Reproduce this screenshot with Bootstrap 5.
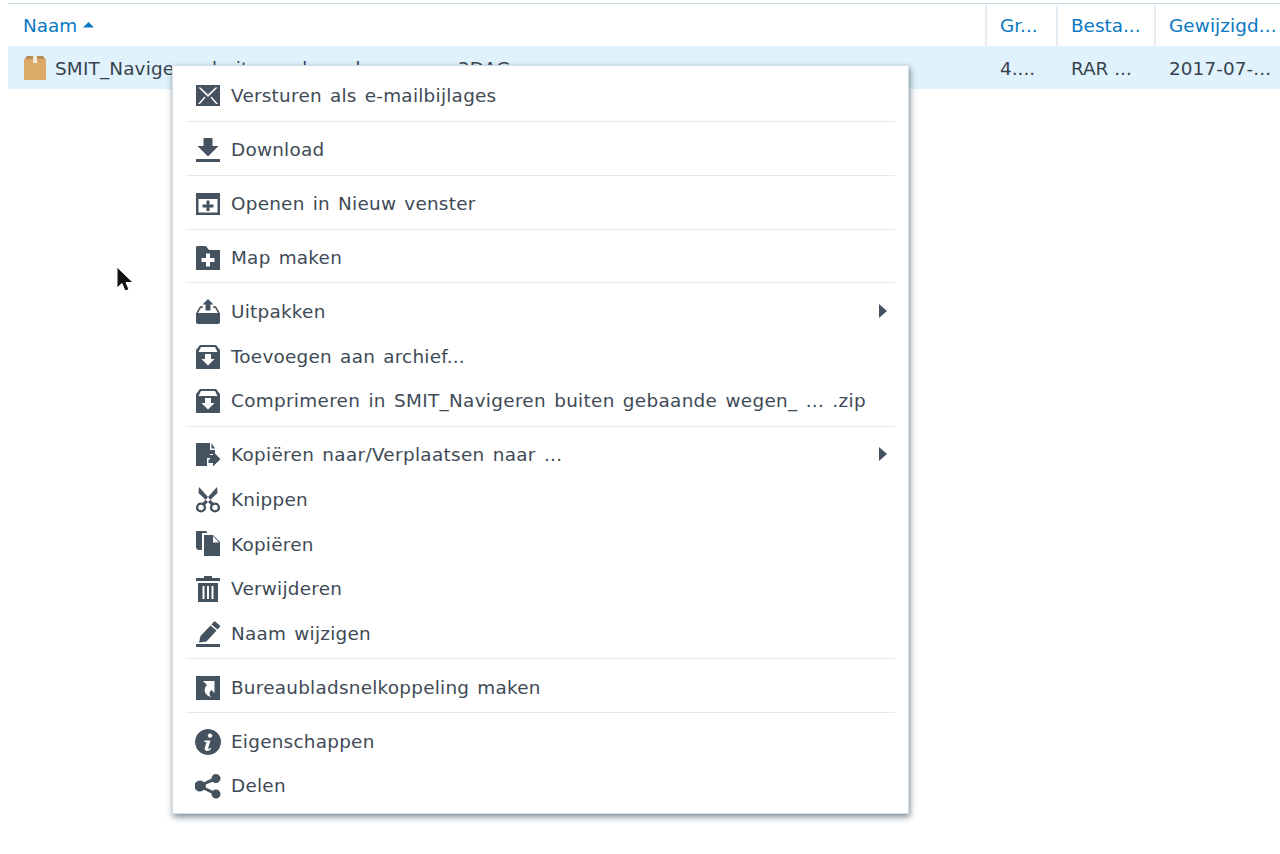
<!DOCTYPE html>
<html lang="nl">
<head>
<meta charset="utf-8">
<title>Bestandsmenu</title>
<link rel="stylesheet" href="https://cdn.jsdelivr.net/npm/bootstrap@5.3.0/dist/css/bootstrap.min.css">
<style>
html,body{height:100%}
body{font-family:"DejaVu Sans","Liberation Sans",sans-serif;font-size:18.4px;color:#3e4a56;background:#fff;overflow:hidden;position:relative}
.file-table{margin:3px 0 0 8px;border-top:1px solid #c9dde9}
.head-row{height:42px;color:#0a78c2;padding-top:1px}
.file-row{height:43px;background:#e0f2fc;color:#38434e;padding-top:2px}
.c-name{width:977px;padding-left:15px}
.c-size{width:71px;padding-left:13px;border-left:2px solid #e3edf3}
.c-type{width:98px;padding-left:13px;border-left:2px solid #e3edf3}
.c-date{flex:1;padding-left:13px;border-left:2px solid #e3edf3;white-space:nowrap;letter-spacing:.1px}
.file-row .c-size,.file-row .c-type,.file-row .c-date{border-left-color:transparent}
.file-title{letter-spacing:.17px;word-spacing:1.200px}
.pkg{margin-right:8px;flex:none;margin-top:-2px}
.sort-up{margin-left:6px}
.ctx-menu.dropdown-menu{display:block;left:172px;top:65px;width:737px;height:748.500px;padding:7.500px 13px;border:1px solid #d5dde3;border-radius:1px;background:#fff;box-shadow:1px 3px 6px rgba(60,75,90,.65)}
.ctx-menu .dropdown-item{height:44.600px;padding:1px 0 0 9px;color:#3e4a56;gap:10px;font-size:18.400px;letter-spacing:.25px;word-spacing:2px}
.ctx-menu .dropdown-item.wide-line{letter-spacing:.32px}
.ctx-menu .dropdown-item:hover{background:#fff}
.ctx-menu svg.ico{flex:none;fill:#45525f}
.ctx-menu .dropdown-divider{margin:2.500px 0 5.870px;border-top:1px solid #e4eaf2;opacity:1}
.sub-caret{margin-left:auto;margin-right:8px;margin-top:-2px;flex:none}
.arrow-cursor{position:absolute;left:114px;top:265px}
</style>
</head>
<body>
<div class="file-table">
  <div class="d-flex align-items-center head-row">
    <div class="c-name d-flex align-items-center">Naam<svg class="sort-up" width="11" height="6" viewBox="0 0 11 6"><path d="M5.500 0 11 5.500H0z" fill="#0a78c2"/></svg></div>
    <div class="c-size h-100 d-flex align-items-center">Gr...</div>
    <div class="c-type h-100 d-flex align-items-center">Besta...</div>
    <div class="c-date h-100 d-flex align-items-center">Gewijzigd...</div>
  </div>
  <div class="d-flex align-items-center file-row">
    <div class="c-name d-flex align-items-center">
      <svg class="pkg" width="24" height="25" viewBox="0 0 24 25"><path d="M1 5 4 1H10V8H14V1H20L23 5V25H1z" fill="#dba968"/><path d="M10 1h4v7h-4z" fill="#f6ead9"/><path d="M4 1h6v3H2z" fill="#b98d58"/><path d="M14 1h6l2 3h-8z" fill="#b98d58"/></svg>
      <span class="text-nowrap file-title">SMIT_Navigeren buiten gebaande wegen_ 3DAG</span>
    </div>
    <div class="c-size">4....</div>
    <div class="c-type">RAR ...</div>
    <div class="c-date">2017-07-...</div>
  </div>
</div>

<svg class="arrow-cursor" width="22" height="30" viewBox="0 0 22 30"><path d="M3 2V23L8 18.500 11 26 15 24.500 12 17.500H19z" fill="#111" stroke="#fff" stroke-width="1"/></svg>

<ul class="dropdown-menu ctx-menu list-unstyled m-0">
  <li><a class="dropdown-item d-flex align-items-center" href="#"><svg class="ico" width="26" height="26" viewBox="0 0 26 26"><path fill-rule="evenodd" d="M1 2H25V23H1zM3.500 4.500 13 14 22.500 4.500H20.500L13 11.500 5.500 4.500zM3 21H5L10.500 14.500 9.500 13.500zM23 21H21L15.500 14.500 16.500 13.500z"/></svg>Versturen als e-mailbijlages</a></li>
  <li><hr class="dropdown-divider"></li>
  <li><a class="dropdown-item d-flex align-items-center" href="#"><svg class="ico" width="26" height="26" viewBox="0 0 26 26"><path d="M8.500 1H17.500V9H23.500L13 19.500 2.500 9H8.500zM1 22H25V25H1z"/></svg>Download</a></li>
  <li><hr class="dropdown-divider"></li>
  <li><a class="dropdown-item d-flex align-items-center" href="#"><svg class="ico" width="26" height="26" viewBox="0 0 26 26"><path fill-rule="evenodd" d="M1 2H25V24H1zM3.500 8V21.500H22.500V8zM11.500 9.500H14.500V13.500H18.500V16.500H14.500V20H11.500V16.500H7.500V13.500H11.500z"/></svg>Openen in Nieuw venster</a></li>
  <li><hr class="dropdown-divider"></li>
  <li><a class="dropdown-item d-flex align-items-center" href="#"><svg class="ico" width="26" height="26" viewBox="0 0 26 26"><path fill-rule="evenodd" d="M2 1H11L14 5H25V25H1V2zM11 8.500V13H6.500V17H11V21.500H15V17H19.500V13H15V8.500z"/></svg>Map maken</a></li>
  <li><hr class="dropdown-divider"></li>
  <li><a class="dropdown-item d-flex align-items-center" href="#"><svg class="ico" width="26" height="26" viewBox="0 0 26 26"><path d="M13 0 18.500 5.500H15.500V11.500H10.500V5.500H7.500z"/><path d="M2 14 5.500 8H8M18 8H20.500L24 14" fill="none" stroke="#45525f" stroke-width="1.500"/><path d="M1 14H25V23Q25 25 23 25H3Q1 25 1 23z"/></svg>Uitpakken<svg class="sub-caret" width="8" height="14" viewBox="0 0 8 14"><path d="M0 0 8 7 0 14z" fill="#45525f"/></svg></a></li>
  <li><a class="dropdown-item d-flex align-items-center" href="#"><svg class="ico" width="26" height="26" viewBox="0 0 26 26"><path fill-rule="evenodd" d="M5 1H21L25 6V25H1V6zM6 3 3.500 8H22.500L20 3zM10 10V15H6.500L13 21.500 19.500 15H16V10z"/></svg>Toevoegen aan archief...</a></li>
  <li><a class="dropdown-item wide-line d-flex align-items-center" href="#"><svg class="ico" width="26" height="26" viewBox="0 0 26 26"><path fill-rule="evenodd" d="M5 1H21L25 6V25H1V6zM6 3 3.500 8H22.500L20 3zM10 10V15H6.500L13 21.500 19.500 15H16V10z"/></svg>Comprimeren in SMIT_Navigeren buiten gebaande wegen_ ... .zip</a></li>
  <li><hr class="dropdown-divider"></li>
  <li><a class="dropdown-item wide-line d-flex align-items-center" href="#"><svg class="ico" width="26" height="26" viewBox="0 0 26 26"><path d="M1 1H15V8H20V12H15V16H12V24H1zM16.500 1 20 6.500H16.500zM15 13H18V9.500L25.500 17 18 24.500V21H13.500V17.500H15z"/></svg>Kopiëren naar/Verplaatsen naar ...<svg class="sub-caret" width="8" height="14" viewBox="0 0 8 14"><path d="M0 0 8 7 0 14z" fill="#45525f"/></svg></a></li>
  <li><a class="dropdown-item d-flex align-items-center" href="#"><svg class="ico" width="26" height="26" viewBox="0 0 26 26"><path d="M4 0 17 14.500 20 17.500 17 19 13.500 15.500 3.500 6zM22 0 9 14.500 6 17.500 9 19 12.500 15.500 22.500 6z"/><circle cx="6" cy="20.500" r="3.900" fill="none" stroke="#45525f" stroke-width="2.400"/><circle cx="20" cy="20.500" r="3.900" fill="none" stroke="#45525f" stroke-width="2.400"/></svg>Knippen</a></li>
  <li><a class="dropdown-item d-flex align-items-center" href="#"><svg class="ico" width="26" height="26" viewBox="0 0 26 26"><path d="M1 0H11L12.500 2H7V19H3L1 17zM9 4H18L25 11V25H9zM18 5V11.500H24z"/></svg>Kopiëren</a></li>
  <li><a class="dropdown-item d-flex align-items-center" href="#"><svg class="ico" width="26" height="26" viewBox="0 0 26 26"><path fill-rule="evenodd" d="M9 0H17V2H25V5H1V2H9zM3 7H23V26H3zM7.500 10V23H9.500V10zM12 10V23H14V10zM16.500 10V23H18.500V10z"/></svg>Verwijderen</a></li>
  <li><a class="dropdown-item d-flex align-items-center" href="#"><svg class="ico" width="26" height="26" viewBox="0 0 26 26"><path d="M19.500 0 25.500 5 22.500 8.500 16.500 3.500zM15.500 4.500 21.500 9.500 11.500 20.500 4 21.500 5.500 15zM1 23H25V26H1z"/></svg>Naam wijzigen</a></li>
  <li><hr class="dropdown-divider"></li>
  <li><a class="dropdown-item d-flex align-items-center" href="#"><svg class="ico" width="26" height="26" viewBox="0 0 26 26"><path fill-rule="evenodd" d="M1 1H25V25H1zM8 6H19.500V18L16.500 15C14 17 14 20 16 22 10 21 7.500 14 12 10z"/></svg>Bureaubladsnelkoppeling maken</a></li>
  <li><hr class="dropdown-divider"></li>
  <li><a class="dropdown-item d-flex align-items-center" href="#"><svg class="ico" width="26" height="26" viewBox="0 0 26 26"><path fill-rule="evenodd" d="M13 0A13 13 0 1 1 12.990 0zM15 4.500A2.200 2.200 0 1 0 15.010 4.500zM9.500 11.500 9.200 13H11.500L9.800 19C9.300 21 10.500 22 12 22 13.800 22 15.200 21 16.200 19.500L15.300 18.800C14.700 19.600 14 20 13.500 20 13 20 13 19.500 13.200 19L15.500 11.500z"/></svg>Eigenschappen</a></li>
  <li><a class="dropdown-item d-flex align-items-center" href="#"><svg class="ico" width="26" height="26" viewBox="0 0 26 26"><path d="M21 1A4.500 4.500 0 1 1 17.800 8.700L10.700 11.500A5 5 0 0 1 10.700 14.500L17.800 17.800A4.500 4.500 0 1 1 16.500 20.500L9 16.700A5.500 5.500 0 1 1 9 9.300L16.500 5.500A4.500 4.500 0 0 1 21 1z"/></svg>Delen</a></li>
</ul>
</body>
</html>
